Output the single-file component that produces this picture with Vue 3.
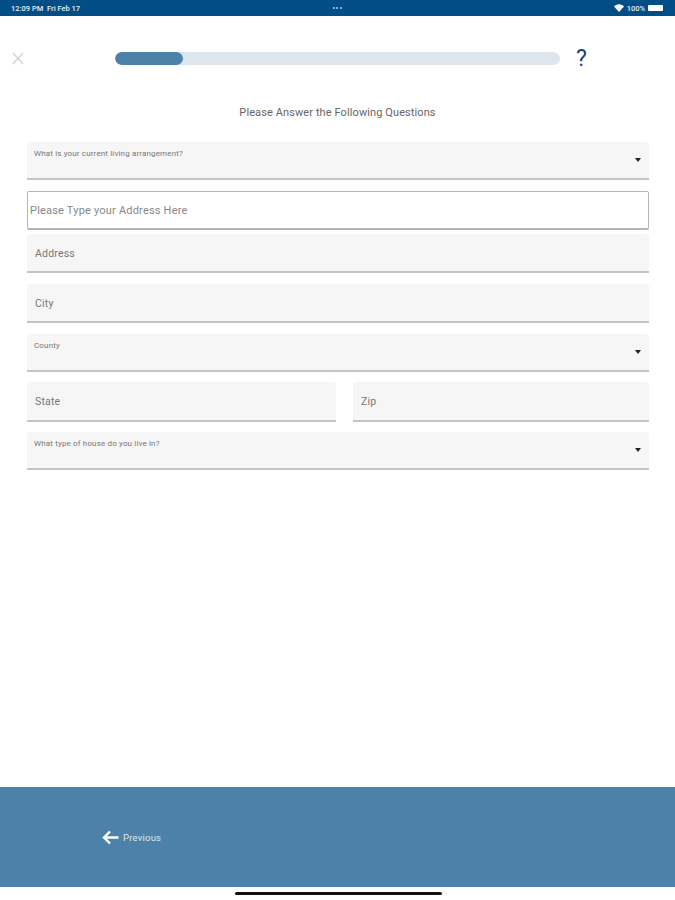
<template>
  <div class="page">
    <!-- iPad status bar -->
    <div class="status-bar">
      <span class="status-time">12:09 PM &nbsp;Fri Feb 17</span>
      <span class="status-dots"><i></i><i></i><i></i></span>
      <span class="status-right">
        <svg class="wifi" width="10" height="8" viewBox="0 0 10 8">
          <path d="M0 2.6C2.8-.5 7.200-.5 10 2.600L5 8z" fill="#fff" />
        </svg>
        <span>100%</span>
        <span class="battery"></span>
      </span>
    </div>

    <div class="top-row">
      <svg class="close-icon" width="12" height="13" viewBox="0 0 12 13">
        <path d="M1 1l10 11M11 1L1 12" stroke="#d4d4d4" stroke-width="1.500" fill="none" />
      </svg>
      <div class="progress">
        <div class="progress-fill" :style="{ width: progress + '%' }"></div>
      </div>
      <span class="help">?</span>
    </div>

    <h1 class="title">Please Answer the Following Questions</h1>

    <form class="form">
      <div class="field select">
        <span class="small-label">What is your current living arrangement?</span>
        <span class="caret"></span>
      </div>
      <div class="search-box">Please Type your Address Here</div>
      <div class="field address"><span class="label">Address</span></div>
      <div class="field"><span class="label">City</span></div>
      <div class="field select">
        <span class="small-label">County</span>
        <span class="caret"></span>
      </div>
      <div class="field-row">
        <div class="field state"><span class="label">State</span></div>
        <div class="field zip"><span class="label">Zip</span></div>
      </div>
      <div class="field select">
        <span class="small-label">What type of house do you live in?</span>
        <span class="caret"></span>
      </div>
    </form>

    <div class="footer">
      <button type="button" class="prev-btn">
        <svg width="17" height="15" viewBox="0 0 17 15">
          <path d="M8 1.500L2 7.500l6 6M2.500 7.500H16.500" stroke="#fff" stroke-width="2.400" fill="none" />
        </svg>
        <span>Previous</span>
      </button>
    </div>
    <div class="home-area"><div class="home-indicator"></div></div>
  </div>
</template>

<script setup>
const progress = 15.3
</script>

<style>
html,
body {
  margin: 0;
  background: #fff;
}
</style>

<style scoped>
.page {
  width: 675px;
  height: 900px;
  display: flex;
  flex-direction: column;
  overflow: hidden;
  background: #fff;
  font-family: Roboto, "Liberation Sans", sans-serif;
}

/* Status bar */
.status-bar {
  height: 16px;
  flex: none;
  box-sizing: border-box;
  padding: 0 12px 0 11px;
  display: grid;
  grid-template-columns: 1fr auto 1fr;
  align-items: center;
  background: #014e87;
  color: #e6eef5;
  font-size: 7.500px;
  font-weight: 500;
}

.status-dots {
  display: flex;
  gap: 1.500px;
}

.status-dots i {
  width: 2px;
  height: 2px;
  border-radius: 50%;
  background: #b9cfe0;
}

.status-right {
  display: flex;
  align-items: center;
  justify-content: flex-end;
  gap: 3px;
}

.battery {
  width: 15px;
  height: 6px;
  border-radius: 1px;
  background: #fff;
}

/* Progress row */
.top-row {
  height: 13px;
  margin-top: 36px;
  flex: none;
  position: relative;
  display: flex;
  align-items: center;
  padding-left: 12px;
}

.close-icon {
  flex: none;
}

.progress {
  width: 445px;
  height: 13px;
  margin-left: 91px;
  border-radius: 7px;
  background: #dde6ec;
  overflow: hidden;
}

.progress-fill {
  height: 100%;
  border-radius: 7px;
  background: #4c82a9;
}

.help {
  margin-left: 16px;
  font-size: 23px;
  line-height: 13px;
  color: #1a3d83;
}

.title {
  margin: 41px 0 0;
  height: 14px;
  flex: none;
  text-align: center;
  font-size: 11px;
  line-height: 14px;
  font-weight: 400;
  letter-spacing: 0.1px;
  color: #666;
}

/* Form */
.form {
  margin: 22px 26px 0 27px;
  display: flex;
  flex-direction: column;
  gap: 11px;
}

.field {
  position: relative;
  height: 39px;
  box-sizing: border-box;
  display: flex;
  align-items: center;
  padding: 1px 8px 0;
  border-radius: 3px 3px 0 0;
  background: #f6f6f6;
  border-bottom: 2px solid #c4c4c4;
}

.select {
  height: 38px;
  align-items: flex-start;
  padding: 7px 7px 0;
}

.label {
  font-size: 10.500px;
  letter-spacing: 0.2px;
  color: #777;
}

.small-label {
  font-size: 8px;
  line-height: 10px;
  letter-spacing: 0.15px;
  color: #777;
}

.caret {
  position: absolute;
  right: 8px;
  top: 16px;
  width: 0;
  height: 0;
  border-left: 3.500px solid transparent;
  border-right: 3.500px solid transparent;
  border-top: 4px solid #222;
}

.search-box {
  height: 39px;
  box-sizing: border-box;
  display: flex;
  align-items: center;
  padding-left: 2px;
  border: 1px solid #b5b5b5;
  border-bottom-width: 2px;
  border-radius: 2px;
  background: #fff;
  font-size: 11px;
  letter-spacing: 0.2px;
  color: #888;
}

.address {
  margin-top: -7px;
}

.field-row {
  display: flex;
  gap: 17px;
  margin-bottom: -1px;
  margin-top: -1px;
}

.state {
  width: 309px;
  height: 40px;
}

.zip {
  flex: 1;
  height: 40px;
}

/* Footer */
.footer {
  margin-top: auto;
  height: 100px;
  flex: none;
  display: flex;
  align-items: center;
  padding-left: 102px;
  background: #4c82a9;
}

.prev-btn {
  display: flex;
  align-items: center;
  gap: 4px;
  padding: 0;
  border: none;
  background: none;
  color: #dbe7f0;
  font-family: inherit;
  font-size: 9.500px;
  letter-spacing: 0.2px;
}

.home-area {
  height: 13px;
  flex: none;
  padding-top: 5px;
  box-sizing: border-box;
}

.home-indicator {
  width: 207px;
  height: 3px;
  margin-left: 235px;
  border-radius: 2px;
  background: #111;
}
</style>
